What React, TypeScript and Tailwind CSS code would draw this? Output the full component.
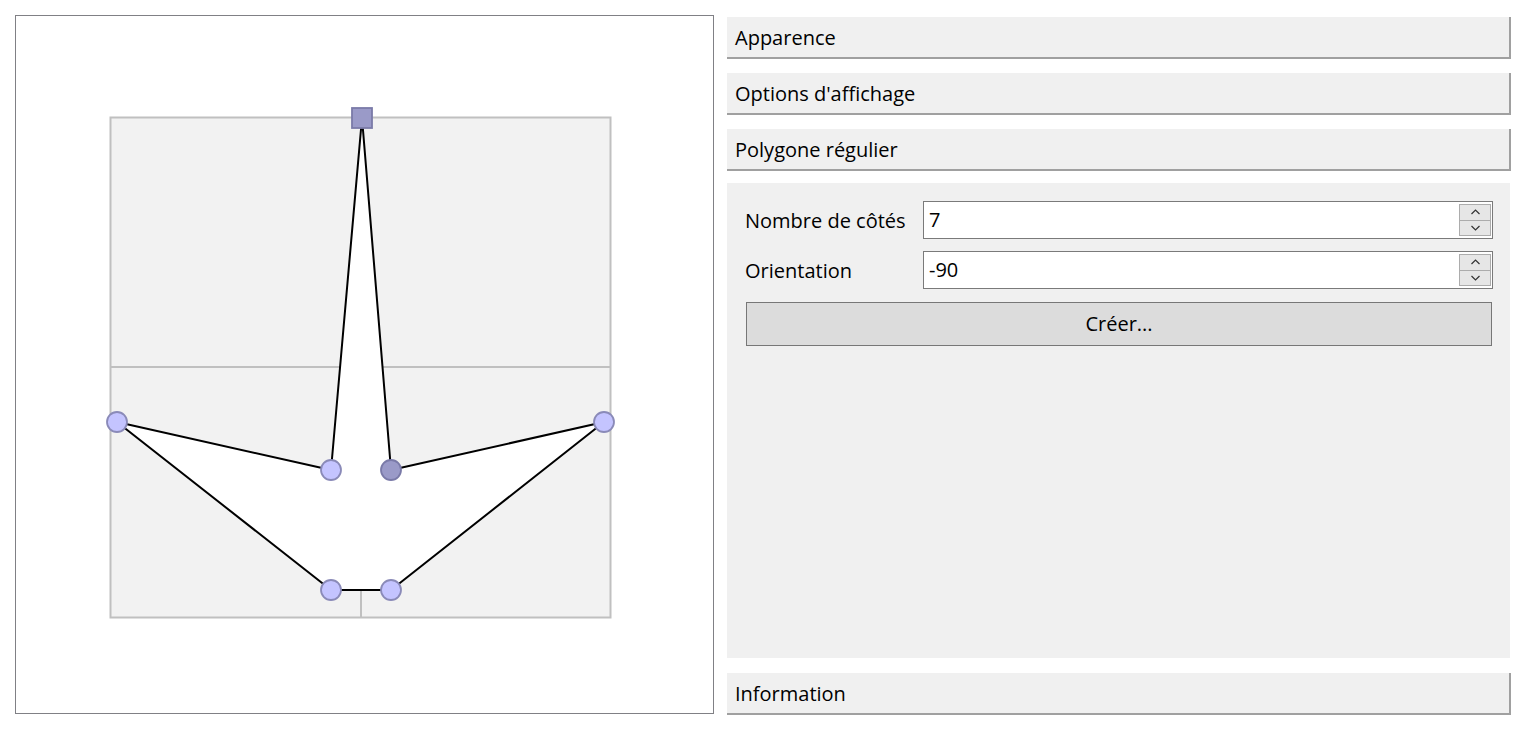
import React from 'react';

const pts: [number, number][] = [
  [362, 118],
  [391, 470],
  [604, 422],
  [391, 590],
  [331, 590],
  [117, 422],
  [331, 470],
];

// canvas offset: the box starts at (15,15) in page coords, svg inside the 1px border
const OX = 16;
const OY = 16;

const Canvas = () => {
  const poly = pts.map(([x, y]) => `${x - OX},${y - OY}`).join(' ');
  return (
    <div className="w-[699px] h-[699px] border border-[#808085] bg-white shrink-0">
      <svg width="697" height="697" viewBox="0 0 697 697">
        <rect x={110.5 - OX} y={117.5 - OY} width={500} height={500} fill="#f2f2f2" stroke="#c0c0c0" strokeWidth="2" />
        <line x1={110 - OX} y1={367 - OY} x2={611 - OX} y2={367 - OY} stroke="#c0c0c0" strokeWidth="2" />
        <line x1={361 - OX} y1={117 - OY} x2={361 - OX} y2={617 - OY} stroke="#c0c0c0" strokeWidth="2" />
        <polygon points={poly} fill="#ffffff" stroke="#000000" strokeWidth="2" strokeLinejoin="round" />
        {pts.slice(1).map(([x, y], i) => (
          <circle
            key={i}
            cx={x - OX}
            cy={y - OY}
            r={10}
            fill={i === 0 ? '#9a9ac8' : '#c4c4ff'}
            stroke={i === 0 ? '#7a7aa8' : '#8a8ab8'}
            strokeWidth="1.8"
          />
        ))}
        <rect x={352 - OX} y={108 - OY} width={20} height={20} fill="#9a9ac8" stroke="#7a7aa8" strokeWidth="1.8" />
      </svg>
    </div>
  );
};

const Header = ({ title }: { title: string }) => (
  <div className="h-[42px] bg-[#f0f0f0] border-b-2 border-r-2 border-[#a0a0a0] flex items-center pl-[8px] pt-[2px] text-[20px] text-black">
    {title}
  </div>
);

const Spin = ({ value }: { value: string }) => (
  <div className="flex-1 h-[38px] border border-[#7a7a7a] bg-white flex items-center">
    <span className="flex-1 pl-[5px] text-[20px]">{value}</span>
    <div className="w-[32px] h-[32px] mr-[1px] flex flex-col">
      <div className="flex-1 border border-[#acacac] bg-[#e6e6e6] flex items-center justify-center">
        <svg width="9" height="6" viewBox="0 0 9 6">
          <path d="M0.5 5 L4.5 1 L8.5 5" fill="none" stroke="#333" strokeWidth="1.2" />
        </svg>
      </div>
      <div className="flex-1 border border-t-0 border-[#acacac] bg-[#e6e6e6] flex items-center justify-center">
        <svg width="9" height="6" viewBox="0 0 9 6">
          <path d="M0.5 1 L4.5 5 L8.5 1" fill="none" stroke="#333" strokeWidth="1.2" />
        </svg>
      </div>
    </div>
  </div>
);

export default function App() {
  return (
    <div
      className="w-[1526px] h-[732px] bg-white flex text-black"
      style={{ fontFamily: '"Open Sans", "Noto Sans", sans-serif' }}
    >
      <div className="ml-[15px] mt-[15px]">
        <Canvas />
      </div>
      <div className="ml-[13px] mt-[17px] w-[784px] flex flex-col">
        <Header title="Apparence" />
        <div className="h-[14px]" />
        <Header title="Options d'affichage" />
        <div className="h-[14px]" />
        <Header title="Polygone régulier" />
        <div className="h-[12px]" />
        <div className="w-[783px] h-[475px] bg-[#f0f0f0] pt-[18px] pl-[18px] pr-[17px]">
          <div className="flex items-center">
            <span className="w-[178px] text-[20px] pt-[1px]">Nombre de côtés</span>
            <Spin value="7" />
          </div>
          <div className="flex items-center mt-[12px]">
            <span className="w-[178px] text-[20px] pt-[1px]">Orientation</span>
            <Spin value="-90" />
          </div>
          <button className="mt-[13px] ml-[1px] w-[746px] h-[44px] bg-[#dcdcdc] border border-[#777777] text-[20px] flex items-center justify-center">
            Créer...
          </button>
        </div>
        <div className="h-[15px]" />
        <Header title="Information" />
      </div>
    </div>
  );
}
